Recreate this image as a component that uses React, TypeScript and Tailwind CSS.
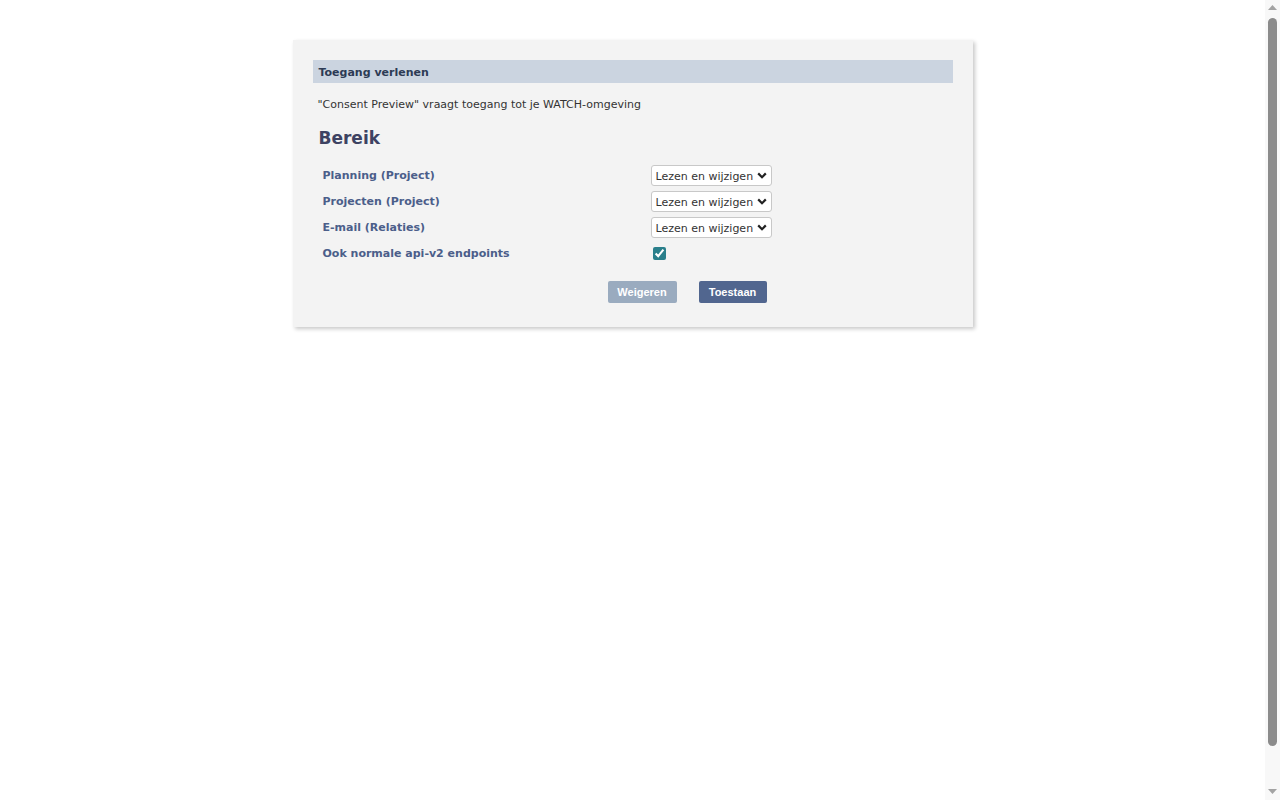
import { useState } from 'react'

const scopes = ['Planning (Project)', 'Projecten (Project)', 'E-mail (Relaties)']

function Chevron() {
  return (
    <svg width="10" height="7" viewBox="0 0 10 7" className="pointer-events-none absolute right-[5px] top-[7px]">
      <path d="M1.2 1.4L5 5.2l3.8-3.8" fill="none" stroke="#222" strokeWidth="2.2" />
    </svg>
  )
}

export default function App() {
  const [values, setValues] = useState<string[]>(scopes.map(() => 'rw'))
  const [apiV2, setApiV2] = useState(true)

  return (
    <div className="flex h-[800px] overflow-hidden bg-white">
      <main className="flex-1 pt-10 font-['DejaVu_Sans',Verdana,sans-serif] text-[11px] text-[#333]">
        <section className="mx-auto w-[680px] bg-[#f3f3f3] px-5 pt-5 pb-6 shadow-[2px_2px_4px_rgba(0,0,0,0.22)]">
          <div className="flex h-[23px] items-center bg-[#cbd4e0] px-[6px] pt-[3px] font-bold text-[#2d3b55]">
            Toegang verlenen
          </div>
          <p className="mt-[15px] px-[5px] leading-[14px]">
            "Consent Preview" vraagt toegang tot je WATCH-omgeving
          </p>
          <h2 className="mt-[15px] px-[6px] text-[17px] font-bold leading-[22px] text-[#3d4262]">Bereik</h2>

          <div className="mt-[13px] px-[10px]">
            {scopes.map((scope, i) => (
              <div key={scope} className="flex h-[26px] items-center">
                <label className="w-[328px] pt-[2px] font-bold text-[#4b5e8a]">{scope}</label>
                <div className="relative">
                  <select
                    value={values[i]}
                    onChange={(e) => setValues(values.map((v, j) => (j === i ? e.target.value : v)))}
                    className="block h-[21px] w-[121px] appearance-none rounded-[3px] border border-[#c8c8c8] bg-white pt-[3px] pl-[4px] text-[11px] leading-[14px] text-[#333] outline-none"
                  >
                    <option value="r">Lezen</option>
                    <option value="rw">Lezen en wijzigen</option>
                    <option value="none">Geen toegang</option>
                  </select>
                  <Chevron />
                </div>
              </div>
            ))}
            <div className="flex h-[26px] items-center">
              <label className="w-[328px] pt-[2px] font-bold text-[#4b5e8a]">Ook normale api-v2 endpoints</label>
              <input
                type="checkbox"
                checked={apiV2}
                onChange={(e) => setApiV2(e.target.checked)}
                className="ml-[2px] h-[13px] w-[13px] accent-[#2a7f8b]"
              />
            </div>
          </div>

          <div className="mt-[15px] flex gap-[22px] pl-[295px] font-['Liberation_Sans',Arial,sans-serif] text-[11px] font-bold text-white">
            <button type="button" className="h-[22px] w-[69px] rounded-[2px] bg-[#9aabbf]">
              Weigeren
            </button>
            <button type="button" className="h-[22px] w-[68px] rounded-[2px] bg-[#51668f]">
              Toestaan
            </button>
          </div>
        </section>
      </main>

      <aside className="flex w-[15px] flex-col items-center bg-[#f8f8f8] pt-[5px]">
        <svg width="9" height="5" viewBox="0 0 9 5">
          <path d="M4.5 0L9 5H0z" fill="#a3a3a3" />
        </svg>
        <div className="mt-[8px] h-[728px] w-[9px] rounded-full bg-[#8b8b8b]" />
        <svg width="9" height="5" viewBox="0 0 9 5" className="mt-[43px]">
          <path d="M0 0h9L4.5 5z" fill="#a3a3a3" />
        </svg>
      </aside>
    </div>
  )
}
